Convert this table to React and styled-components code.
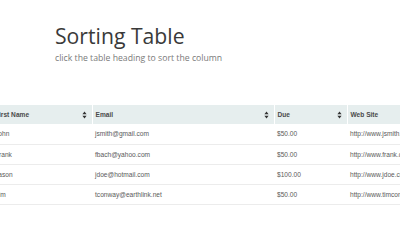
import React from 'react';
import styled, { createGlobalStyle } from 'styled-components';

const GlobalStyle = createGlobalStyle`
    html, body {
        margin: 0;
        padding: 0;
        background: #ffffff;
        overflow: hidden;
    }
`;

const Page = styled.div`
    width: 400px;
    height: 250px;
    overflow: hidden;
    font-family: "Open Sans", sans-serif;
`;

const Intro = styled.header`
    padding: 23px 0 0 55px;
    height: 105px;
    box-sizing: border-box;
`;

const Title = styled.h1`
    margin: 0;
    font-size: 21.2px;
    line-height: 26px;
    font-weight: 400;
    color: #3a3a3a;
`;

const Subtitle = styled.p`
    margin: 3px 0 0;
    font-size: 8.7px;
    line-height: 12px;
    color: #7a7a7a;
`;

const Table = styled.table`
    margin-left: -8px;
    width: 435px;
    table-layout: fixed;
    border-collapse: collapse;
    font-family: "Liberation Sans", Arial, sans-serif;
    font-size: 6.6px;
`;

const HeadCell = styled.th`
    position: relative;
    width: ${p => p.$w}px;
    height: 19px;
    padding: 0 3px;
    box-sizing: border-box;
    background: #e6eeee;
    border-left: ${p => (p.$first ? 'none' : '1px solid #ffffff')};
    text-align: left;
    font-weight: 700;
    color: #4a4a4a;
    white-space: nowrap;
`;

const Arrows = styled.svg`
    position: absolute;
    right: 5px;
    top: 6px;
`;

const Cell = styled.td`
    height: 20px;
    padding: 0 3px;
    box-sizing: border-box;
    border-bottom: 1px solid #ececec;
    color: #5a5a5a;
    white-space: nowrap;
    overflow: hidden;
`;

const SortIcon = () => (
    <Arrows width="5" height="8" viewBox="0 0 5 8">
        <path d="M2.5 0.5 L4.6 3.3 L0.4 3.3 Z M2.5 7.5 L4.6 4.7 L0.4 4.7 Z" fill="#333" />
    </Arrows>
);

const columns = [
    { label: 'First Name', w: 100, sort: true },
    { label: 'Email', w: 182, sort: true },
    { label: 'Due', w: 73, sort: true },
    { label: 'Web Site', w: 80, sort: false },
];

const rows = [
    ['John', 'jsmith@gmail.com', '$50.00', 'http://www.jsmith.com'],
    ['Frank', 'fbach@yahoo.com', '$50.00', 'http://www.frank.com'],
    ['Jason', 'jdoe@hotmail.com', '$100.00', 'http://www.jdoe.com'],
    ['Tim', 'tconway@earthlink.net', '$50.00', 'http://www.timconway.com'],
];

export default function App() {
    return (
        <Page>
            <GlobalStyle />
            <Intro>
                <Title>Sorting Table</Title>
                <Subtitle>click the table heading to sort the column</Subtitle>
            </Intro>
            <Table>
                <thead>
                    <tr>
                        {columns.map((c, i) => (
                            <HeadCell key={c.label} $w={c.w} $first={i === 0}>
                                {c.label}
                                {c.sort && <SortIcon />}
                            </HeadCell>
                        ))}
                    </tr>
                </thead>
                <tbody>
                    {rows.map(r => (
                        <tr key={r[1]}>
                            {r.map((v, i) => (
                                <Cell key={i}>{v}</Cell>
                            ))}
                        </tr>
                    ))}
                </tbody>
            </Table>
        </Page>
    );
}
